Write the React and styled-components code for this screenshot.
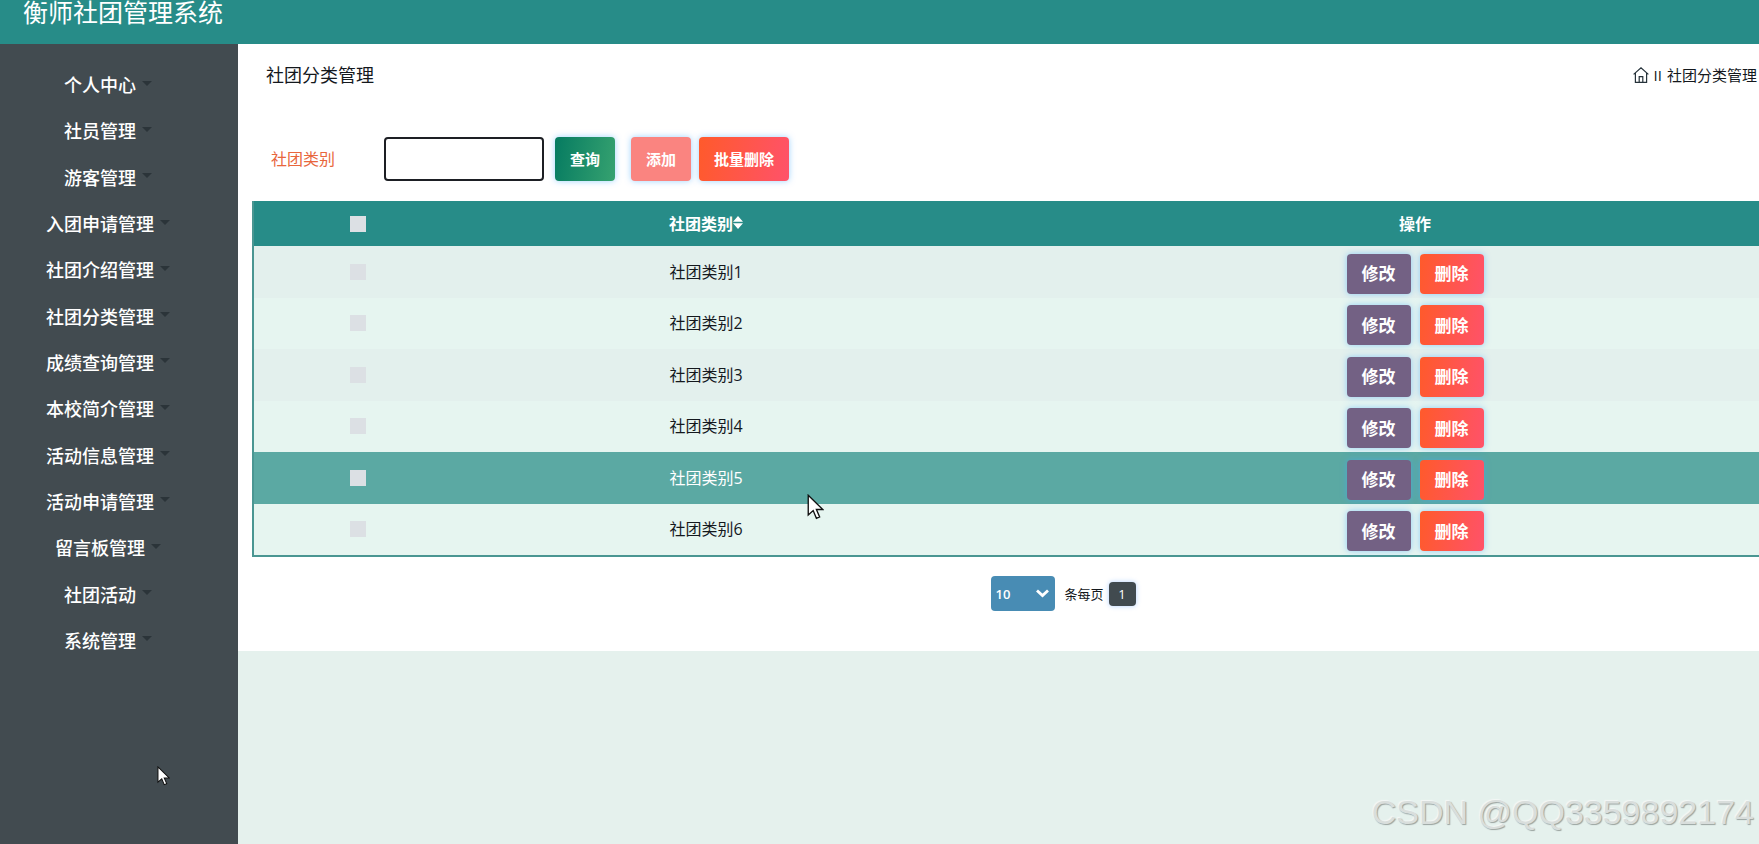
import React, { useState } from 'react'
import styled, { createGlobalStyle, css } from 'styled-components'

const menus = [
  '个人中心', '社员管理', '游客管理', '入团申请管理', '社团介绍管理', '社团分类管理', '成绩查询管理',
  '本校简介管理', '活动信息管理', '活动申请管理', '留言板管理', '社团活动', '系统管理',
]

const rows = ['社团类别1', '社团类别2', '社团类别3', '社团类别4', '社团类别5', '社团类别6']

const Pointer = ({ size, x, y }) => (
  <PointerSvg $x={x} $y={y} width={size * 2 / 3} height={size} viewBox="0 0 14 21" aria-hidden="true">
    <path d="M1 1v16l4-3.6 2.6 6.2 2.6-1.1-2.6-6h5.2z" fill="#fff" stroke="#111" strokeWidth="1.1" />
  </PointerSvg>
)

const App = () => {
  const [keyword, setKeyword] = useState('')
  const [active] = useState(4)

  return (
    <Page>
      <GlobalStyle />
      <Header><Brand>衡师社团管理系统</Brand></Header>
      <Body>
        <Sidebar>
          <Menu>
            {menus.map((name) => (
              <MenuLink href="#" key={name}>{name}<Caret /></MenuLink>
            ))}
          </Menu>
        </Sidebar>
        <Main>
          <Panel>
            <TitleBar>
              <Title>社团分类管理</Title>
              <Crumbs>
                <a href="#" aria-label="home">
                  <svg width="16" height="16" viewBox="0 0 16 16" fill="none" stroke="#26323a" strokeWidth="1.2">
                    <path d="M.6 7.4 8 .9l7.4 6.5M2.4 6v9.3h11.2V6M6.2 15.3V9.6h3.6v5.7" />
                  </svg>
                </a>
                <span>II</span>
                <span>社团分类管理</span>
              </Crumbs>
            </TitleBar>

            <Search onSubmit={(e) => e.preventDefault()}>
              <label htmlFor="keyword">社团类别</label>
              <input id="keyword" type="text" value={keyword} onChange={(e) => setKeyword(e.target.value)} />
              <Actions>
                <Button $kind="query">查询</Button>
              </Actions>
              <Actions>
                <Button type="button" $kind="add">添加</Button>
                <Button type="button" $kind="remove">批量删除</Button>
              </Actions>
            </Search>

            <Wide>
              <Table>
                <colgroup><CheckCol /><NameCol /><col /></colgroup>
                <thead>
                  <tr>
                    <th><Check type="checkbox" aria-label="all" /></th>
                    <th>
                      <SortLabel>
                        社团类别
                        <svg width="10" height="13" viewBox="0 0 10 13" fill="#fff">
                          <path d="M5 0l5 5.8H0zM5 13l5-5.8H0z" />
                        </svg>
                      </SortLabel>
                    </th>
                    <th>操作</th>
                  </tr>
                </thead>
                <tbody>
                  {rows.map((name, i) => (
                    <Row key={name} $active={i === active}>
                      <td><Check type="checkbox" aria-label={name} /></td>
                      <td>{name}</td>
                      <td>
                        <RowActions>
                          <Button type="button" $kind="edit" $row>修改</Button>
                          <Button type="button" $kind="remove" $row>删除</Button>
                        </RowActions>
                      </td>
                    </Row>
                  ))}
                </tbody>
              </Table>
              <Pager>
                <SelectBox>
                  <select id="size" defaultValue="10">
                    <option>10</option>
                    <option>20</option>
                    <option>50</option>
                  </select>
                  <svg width="13" height="9" viewBox="0 0 13 9" fill="none" stroke="#fff" strokeWidth="2.8">
                    <path d="M1 1.4l5.5 5.2L12 1.4" />
                  </svg>
                </SelectBox>
                <label htmlFor="size">条每页</label>
                <PageButton type="button">1</PageButton>
              </Pager>
            </Wide>
          </Panel>
        </Main>
      </Body>
      <Watermark>CSDN @QQ3359892174</Watermark>
      <Pointer size={26} x={807} y={494} />
      <Pointer size={20} x={157} y={766} />
    </Page>
  )
}

export default App

const GlobalStyle = createGlobalStyle`
  * {
    box-sizing: border-box;
  }
  body {
    margin: 0;
    background: #e5f1ed;
    color: #14181d;
    font-family: "Open Sans", "Noto Sans CJK SC", sans-serif;
    font-size: 16px;
  }
  input, button, select {
    font-family: inherit;
  }
  a {
    color: inherit;
    text-decoration: none;
  }
`;

const Page = styled.div`
  position: relative;
  display: flex;
  flex-direction: column;
  min-height: 100vh;
  overflow: hidden;
`;

const Header = styled.header`
  padding: 0 23px 20px;
  background: #278c88;
`;

const Brand = styled.h1`
  margin: 0;
  color: #fff;
  font-size: 25px;
  font-weight: 400;
  line-height: 24px;
`;

const Body = styled.div`
  display: flex;
  flex: 1;
`;

const Sidebar = styled.nav`
  flex: 0 0 238px;
  padding: 17px 22px 0 0;
  background: #424b50;
`;

const Menu = styled.div`
  display: grid;
  grid-auto-rows: 1fr;
  min-height: 602px;
`;

const MenuLink = styled.a`
  display: flex;
  justify-content: center;
  align-items: center;
  gap: 6px;
  color: #fff;
  font-size: 18px;
  font-weight: 500;
`;

const Caret = styled.i`
  border: 5px solid transparent;
  border-top-color: #2b3439;
  border-bottom: 0;
  margin-bottom: 2px;
`;

const Main = styled.main`
  flex: 1;
  min-width: 0;
`;

const Panel = styled.section`
  padding: 16px 0 40px 14px;
  background: #fff;
  overflow: hidden;
`;

const TitleBar = styled.div`
  display: flex;
  justify-content: space-between;
  align-items: center;
  padding: 0 2px 0 14px;
  line-height: 30px;
`;

const Title = styled.h2`
  margin: 0;
  font-size: 18px;
  font-weight: 400;
`;

const Crumbs = styled.div`
  display: flex;
  align-items: center;
  gap: 5px;
  font-size: 15px;
  svg {
    display: block;
  }
`;

const Search = styled.form`
  display: flex;
  align-items: center;
  padding: 47px 19px 20px;
  label {
    width: 113px;
    padding-bottom: 2px;
    color: #e8663c;
  }
  input {
    width: 160px;
    height: 44px;
    margin-right: 11px;
    padding: 0 12px;
    border: 2px solid #1d1f24;
    border-radius: 4px;
    background: #fff;
  }
`;

const Actions = styled.div`
  display: flex;
  gap: 8px;
  margin-right: 16px;
`;

const kinds = {
  query: 'linear-gradient(100deg, #067b61, #36a270)',
  add: '#fa8480',
  edit: '#736184',
  remove: 'linear-gradient(100deg, #ff5a2b, #ff526a)',
};

const Button = styled.button`
  height: 44px;
  padding: 0 15px 2px;
  border: 0;
  border-radius: 4px;
  background: ${({ $kind }) => kinds[$kind]};
  box-shadow: 0 0 6px rgba(60, 170, 255, 0.5);
  color: #fff;
  font-size: 15px;
  font-weight: 700;
  cursor: pointer;
  ${({ $row }) => $row && css`
    height: 40px;
    font-size: 17px;
  `}
`;

// wider than the panel, the right part is cut off
const Wide = styled.div`
  width: calc(100% + 122px);
`;

const Table = styled.table`
  width: 100%;
  height: 356px;
  table-layout: fixed;
  border-collapse: separate;
  border-spacing: 0;
  border: 2px solid #4a9692;
  border-top: 0;
  text-align: center;
  th, td {
    padding: 0 0 2px;
  }
  th {
    height: 45px;
    background: #278c88;
    color: #fff;
  }
`;

const CheckCol = styled.col`
  width: 207px;
`;

const NameCol = styled.col`
  width: 490px;
`;

const Row = styled.tr`
  background: #e6f5f0;
  &:nth-child(odd) {
    background: #e3f0ed;
  }
  ${({ $active }) => $active && css`
    &&& {
      background: #5ba9a3;
      color: #fff;
    }
  `}
`;

const Check = styled.input`
  appearance: none;
  display: block;
  width: 16px;
  height: 16px;
  margin: 2px auto 0;
  background: #dce0e4;
  &:checked {
    background: #278c88;
  }
`;

const SortLabel = styled.span`
  display: inline-flex;
  align-items: center;
`;

const RowActions = styled.div`
  display: flex;
  justify-content: center;
  gap: 9px;
  padding-top: 6px;
`;

const Pager = styled.div`
  display: flex;
  justify-content: center;
  align-items: center;
  padding: 19px 6px 0 0;
  font-size: 13px;
  label {
    margin: 0 5px 0 9px;
  }
`;

const SelectBox = styled.div`
  display: grid;
  align-items: center;
  select, svg {
    grid-area: 1 / 1;
  }
  select {
    appearance: none;
    width: 64px;
    height: 35px;
    padding: 0 4px;
    border: 0;
    border-radius: 4px;
    background: #488cb4;
    color: #fff;
    font-size: 13px;
    font-weight: 600;
  }
  svg {
    justify-self: end;
    margin-right: 6px;
    pointer-events: none;
  }
`;

const PageButton = styled.button`
  width: 27px;
  height: 24px;
  padding: 0;
  border: 0;
  border-radius: 4px;
  background: #414a4f;
  box-shadow: 0 0 5px rgba(60, 140, 255, 0.4);
  color: #fff;
  font-size: 13px;
`;

const Watermark = styled.div`
  position: absolute;
  right: 5px;
  bottom: 12px;
  color: #d9dedc;
  font-family: "Liberation Sans", sans-serif;
  font-size: 34px;
  line-height: 40px;
  text-shadow: 1px 1px 1px #9aa3a0, -1px -1px 1px #f4f7f6;
`;

const PointerSvg = styled.svg`
  position: absolute;
  left: ${({ $x }) => $x}px;
  top: ${({ $y }) => $y}px;
`;
